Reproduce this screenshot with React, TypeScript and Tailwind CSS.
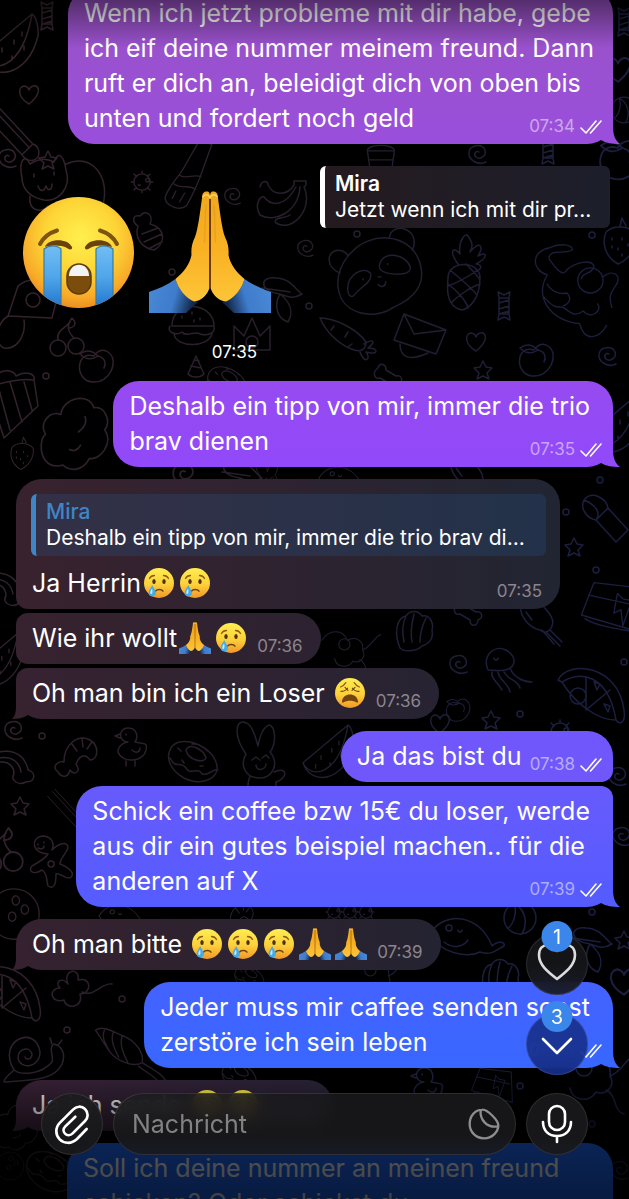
import type { ReactNode } from "react";

/* ---------- wallpaper ---------- */

const DOODLES: Record<string, string> = {
  heart: "M0 9C-12 2 -11 -8 -5 -9C-2 -9 0 -6 0 -5C1 -8 4 -10 7 -9C12 -6 9 2 0 9Z",
  star: "M0 -9L3 -3L9 -2L4 3L6 9L0 6L-6 9L-4 3L-9 -2L-3 -3Z",
  dot: "M3 0A3 3 0 1 1 -3 0A3 3 0 1 1 3 0Z",
  swirl: "M8 8C0 12 -10 6 -9 -2C-8 -9 4 -11 7 -4C9 2 2 6 -2 3C-5 0 -2 -4 1 -2",
  candy: "M-5 -8H5V8H-5ZM-5 -8L-6 -14L0 -11L6 -14L5 -8M-5 8L-6 14L0 11L6 14L5 8M-5 -3L5 -6M-5 3L5 0M-5 8L5 5",
  melon: "M-30 12C-22 38 16 34 26 -8C27 -16 24 -28 20 -30L-30 12ZM-30 12C-22 30 10 28 20 -30M-10 4v4M2 -4v4M10 -12v4M0 12v4M-16 14v4M12 2v4",
  pencil: "M-34 -26L20 32L32 20L-22 -38M-26 -34L28 24M20 32C26 40 34 40 38 34C40 28 38 22 32 20",
  cat: "M-40 -10C-44 -30 -36 -34 -32 -24C-22 -30 -16 -30 -8 -26C-4 -38 2 -32 4 -18C10 0 -4 14 -18 12C-30 10 -40 2 -40 -10ZM4 -24C30 -36 50 -10 40 20M-24 -2C-22 4 -18 4 -16 -2C-14 4 -10 2 -10 -4M-28 -14v3M-8 -16v3M-32 8C-34 22 -22 26 -14 18",
  germ: "M9 0A9 9 0 1 1 -9 0A9 9 0 1 1 9 0ZM4 -2a2 2 0 1 0 4 0a2 2 0 1 0 -4 0M-4 3a1 1 0 1 0 2 0M0 -9v-3M0 9v3M-9 0h-3M9 0h3M6 6l3 3M-6 6l-3 3M-6 -6l-3 -3M6 -6l3 -3",
  bottle: "M22 -44L12 -16C8 -4 2 10 -6 24C-12 30 -28 26 -30 16C-28 4 -14 -8 -8 -20L8 -48ZM-14 -10C-8 -4 2 -12 10 -8M-20 0C-12 6 -2 0 4 6M-22 16l4 -8M-14 20l6 -10",
  banana: "M-24 10C-30 0 -24 -10 -20 -8C-14 0 0 4 12 -18M-24 10C-10 18 14 8 16 -18M-8 18C8 28 30 4 20 -18M-8 18C-12 12 0 14 6 10M-24 -18C-22 -26 -16 -24 -16 -20C-10 -8 4 -10 10 -20L10 -24H22V-20L20 -18",
  bee: "M-8 -10C-14 -14 -14 -22 -6 -20C0 -28 8 -20 4 -12C20 -8 20 8 8 14C-4 12 -12 2 -8 -10ZM-4 -2L12 -8M-2 6L16 -2M4 12L16 6",
  burger: "M-20 2C-20 -26 22 -22 22 2ZM-22 2C-26 8 -16 12 -10 8C-6 14 4 6 8 10C14 12 24 10 22 2M-18 10C-16 24 16 24 20 10M-10 -8v2M0 -12v2M8 -6v2M2 -4v2",
  cherry: "M-4 10a8 8 0 1 1 -16 0a8 8 0 1 1 16 0ZM14 8a8 8 0 1 1 -16 0a8 8 0 1 1 16 0ZM-12 2C-14 -8 -4 -10 0 -16M4 0C-2 -6 -4 -12 2 -20C8 -14 4 -10 -2 -10",
  crown: "M-18 16L-18 -8L-8 2L0 -16L8 2L18 -8L18 16ZM6 8a6 6 0 1 1 -12 0a6 6 0 1 1 12 0",
  toad: "M-24 12L-14 -18C0 -30 22 -22 26 -10L20 14ZM-24 12C-34 18 -40 38 -28 44C-14 46 -6 30 -8 16M8 -4a7 7 0 1 1 -14 0a7 7 0 1 1 14 0",
  peach: "M-2 -10C-20 -16 -22 14 -4 16C14 18 24 -6 12 -14C6 -18 0 -14 -2 -10ZM-16 -12C-8 -18 -2 -14 2 -10C-4 -6 -10 -6 -16 -12M2 -10C10 -8 10 -2 8 2",
  corn: "M-8 8L0 -10L8 8C4 12 -4 12 -8 8ZM-5 0L5 2M-2 -6L3 -5",
  panda: "M-30 -24C-10 -46 28 -44 40 -18C52 10 34 26 14 34C-6 48 -40 42 -44 14C-46 0 -40 -14 -30 -24ZM-42 -2C-58 -8 -56 -26 -44 -26C-38 -26 -34 -22 -34 -20M10 -40C12 -54 36 -52 36 -34C36 -30 35 -28 34 -26M-34 14C-34 0 -18 -10 -10 -2C-8 8 -18 10 -28 22C-32 24 -34 20 -34 14ZM0 -12C4 -26 28 -22 32 -8C32 0 18 0 8 -2C0 -4 -2 -8 0 -12ZM-18 4v1M8 -12v1M-2 2h3M-2 10C2 14 6 12 6 7",
  pineapple: "M-14 6C-14 -12 18 -12 18 6C18 26 8 36 0 38C-12 36 -16 24 -14 6ZM-12 -2C0 8 12 18 14 22M-14 12C-6 18 4 28 6 36M4 -8C10 -2 16 4 18 8M16 -2C4 6 -8 12 -14 14M18 12C6 16 -6 26 -10 30M-4 -8C-14 -22 -8 -26 -2 -18C-4 -32 4 -40 6 -36C12 -28 10 -24 8 -20C18 -32 22 -26 16 -16C26 -22 26 -14 14 -8C22 -8 18 0 14 -2",
  carrot: "M-32 -22C-18 -22 4 -12 14 2C14 10 8 12 2 10C-16 4 -28 -12 -32 -22ZM-18 -14l-3 4M-4 -8l-3 5M0 4l-4 3M12 4C22 -2 24 2 16 8C28 8 26 16 14 12C20 20 12 24 8 12",
  envelope: "M-16 -22L26 -6L16 18L-26 4ZM-16 -22L-6 -2L26 -6M-20 8C-20 24 -8 24 8 17",
  cow: "M-30 -40C-50 -36 -50 -16 -32 -10C-46 14 -30 40 4 44C10 66 26 60 34 46M-30 -40C-18 -46 -4 -44 -4 -38C-12 -32 -30 -40 -30 -28C-20 -14 -14 -8 -10 -16C0 -24 16 -28 20 -20C18 -10 8 -14 6 -6M30 -4a14 14 0 1 1 -28 0a14 14 0 1 1 28 0ZM-36 14C-22 30 -20 24 -14 26C-4 34 0 36 8 30C16 40 30 30 24 22M30 -8C42 -18 52 -8 44 2C38 10 36 16 40 26M-32 0C-28 8 -18 12 -10 10C-4 16 -8 22 -14 24",
  berry: "M-14 -10C-6 -18 10 -16 16 -8C18 6 8 18 -2 22C-16 14 -18 0 -14 -10ZM-8 -4v2M2 -4v2M8 2v2M-2 6v2M-8 4v2M2 12v2M0 -16l2 -8l4 8",
  popcorn: "M-26 -14L-10 36L24 4L20 -22M-26 -14C-34 -24 -22 -30 -18 -26C-12 -34 0 -32 2 -26C12 -32 22 -28 20 -22M-16 -16L-4 28M-4 -20L8 20M10 -20L18 8M-26 -14C-12 -20 8 -24 20 -22",
  tree: "M-10 30C-30 36 -34 10 -26 2C-32 -8 -22 -20 -12 -16C-10 -32 14 -36 18 -22C28 -24 34 -10 28 -2C36 10 24 26 14 24C8 36 -4 36 -10 30ZM4 0C10 -4 12 -10 10 -14M-4 16C0 18 4 16 6 12",
  flashlight: "M-18 -16C-10 -26 4 -18 6 -8L26 14L14 26L-6 4C-16 2 -22 -8 -18 -16ZM-18 -16C-8 -12 0 -4 -6 4M6 -8L-6 4",
  donut: "M-24 -8C-18 -24 14 -16 22 4C28 22 6 28 -10 20C-24 12 -28 0 -24 -8ZM-8 -8C-4 -16 10 -8 12 0C10 6 -6 2 -8 -8ZM-24 0C-18 12 -14 2 -8 10C-4 18 4 8 8 16C16 18 18 10 24 12M-16 -10l3 3M-2 -14h3M12 -8l3 2M-12 2l2 3M6 8h3",
  duck: "M-2 -8C-12 -8 -12 -22 -2 -22C8 -22 8 -12 5 -8C14 -6 18 -8 16 0C14 12 -8 14 -12 2C-12 -4 -6 -8 -2 -8ZM-10 -16l-5 2l5 2M-4 -16v1M-4 11v5M5 11v5M2 0C6 4 10 2 10 -2",
  bunny: "M-16 -6C-30 -26 -26 -44 -14 -36C-8 -32 -6 -20 -4 -14C0 -36 10 -40 12 -28C14 -18 10 -10 8 -8C18 4 10 18 -2 18C-18 18 -22 4 -16 -6ZM-10 0l4 -3l4 3M0 -2l4 -3l3 3M-6 5C-6 12 4 10 4 4M-12 16C-18 30 -10 40 -16 50M12 12C26 6 26 18 14 22C12 32 20 38 18 48",
  shrimp: "M-20 20C-28 14 -18 8 -14 10C-14 -8 0 -18 12 -12C22 -6 20 8 12 8C8 2 2 2 -2 12C4 20 -4 24 -8 18C-10 26 -16 26 -20 20ZM-6 -8l5 7M4 -14l1 9M14 -10l-5 7",
  rainbow: "M-30 -4C-16 -22 14 -22 18 2C26 4 26 14 16 14C8 18 0 12 4 6C4 -8 -14 -12 -28 6M-28 2C-18 -14 8 -16 11 4",
  pizza: "M-32 -10C-22 -30 28 -26 34 20C36 32 30 36 26 30C6 30 -16 12 -28 -8ZM-28 -8C-10 -20 18 -16 26 30M-4 -12L-4 20L20 0M-4 6a8 8 0 1 1 -16 0a8 8 0 1 1 16 0M4 -8l6 2l-3 6zM14 14l6 2l-2 6z",
  jelly: "M-12 6C-18 -8 -6 -20 6 -14C16 -8 16 0 10 4C4 8 -6 6 -12 6ZM-6 -6a2 2 0 1 0 4 0M-8 8C-10 14 -2 18 2 26M-2 8C0 18 8 18 10 28M4 8C8 16 18 16 20 24M10 4C14 14 24 18 32 18",
  shell: "M-14 18C-20 4 -18 -12 -8 -14C-4 -20 4 -20 8 -14C16 -16 20 -6 18 0C20 10 14 14 8 16C2 22 -10 22 -14 18ZM-10 12C-12 2 -12 -6 -8 -14M-2 12C-4 2 -2 -8 0 -16M6 12C6 2 8 -4 12 -12",
  squid: "M-20 -20C-20 -6 -10 4 0 6C4 10 10 8 12 2C16 -6 4 -18 -4 -24M2 6l12 14M6 8l14 14M10 6l12 12M-14 -12l6 8",
  bone: "M-10 -8C-16 -4 -14 4 -8 2L2 8C2 16 10 14 10 8C16 6 14 -2 8 0L-2 -6C-2 -12 -8 -14 -10 -8Z",
  carton: "M-34 10L-20 -26L32 -20L34 30ZM-30 14C-20 22 10 26 34 30M-26 -12L30 0M6 -14L2 8L10 4L12 22L22 -6L12 -8Z",
  ginger: "M-2 -10C-18 -10 -20 -26 -8 -28C4 -28 4 -18 2 -14C8 -20 18 -24 18 -16C16 -10 10 -6 10 0C20 4 26 10 20 14C12 14 10 8 6 10C6 20 4 26 -2 22C-4 16 -2 10 -8 6C-18 12 -22 6 -18 2C-12 -2 -6 -4 -2 -10ZM-12 -20v1M-6 -22v1M-12 -16C-8 -14 -6 -16 -6 -18M4 0a3 3 0 1 1 -6 0a3 3 0 1 1 6 0",
  bowling: "M28 0A28 28 0 1 1 -28 0A28 28 0 1 1 28 0ZM-2 -14a4 5 0 1 0 8 -2a4 5 0 1 0 -8 2M8 -4a4 5 0 1 0 8 -2a4 5 0 1 0 -8 2M-6 4a4 5 0 1 0 8 -2a4 5 0 1 0 -8 2",
  snail: "M-18 10C-36 -20 4 -36 8 -8C8 8 -12 10 -14 -2C-14 -12 -2 -14 0 -6C0 0 -6 0 -7 -3M-18 10C-10 16 10 14 20 2C22 -4 16 -12 22 -16C30 -14 34 -6 30 4C22 22 -6 20 -28 22C-28 18 -22 14 -18 10M20 -16l-2 -6M26 -15l4 -5",
  cone: "M-34 -22C-26 -28 -14 -20 -4 -16C12 -10 20 4 18 14C8 20 -10 12 -18 2C-24 -6 -28 -14 -34 -22ZM-24 -22C-28 -14 -22 -6 -18 2M-14 -20C-18 -10 -12 0 -8 8M-4 -16C-8 -6 -2 6 2 14M18 14C30 22 40 26 44 34M14 18C24 26 34 30 38 38",
  flower: "M0 -6C-6 -20 12 -24 10 -10C24 -14 24 4 12 4C16 18 -2 20 -4 10C-18 14 -20 -2 -8 -2C-14 -8 -6 -14 0 -6ZM14 2C26 8 34 -8 44 -6",
  fish: "M-30 0C-16 -24 20 -20 32 12C38 6 46 8 44 12C36 16 32 22 20 18C8 24 -20 20 -30 0ZM-14 -6a3 3 0 1 0 6 0a3 3 0 1 0 -6 0M-2 -4a2 2 0 1 0 4 0M-16 8C-6 16 4 12 8 6",
  beachball: "M16 0A16 16 0 1 1 -16 0A16 16 0 1 1 16 0ZM-6 -15C6 -8 8 6 2 16M-6 -15C-2 -4 -8 8 -12 10",
  plant: "M0 4C-20 2 -22 -14 -4 -12C10 -12 16 0 22 4C12 10 6 6 0 4ZM0 4C-6 14 -4 28 8 32C14 22 10 12 0 4ZM-18 -2L10 2",
  monkey: "M-40 -14C-30 -30 -10 -30 -4 -14C8 -20 20 -14 18 0C24 10 14 20 4 16C-4 28 -20 24 -22 12M-16 -8a8 8 0 1 0 16 0a8 8 0 1 0 -16 0M18 0C30 -4 34 -18 44 -22M14 14C26 20 20 34 32 38",
  cup: "M-14 -8H16L12 20H-10ZM-14 -8C-14 -16 16 -16 16 -8M-12 2H14",
};

const PLACED: [string, number, number, number?][] = [
  ["melon", 12, 44], ["heart", 29, 95], ["pencil", 4, 126, 0.9], ["candy", 47, 16], ["swirl", 8, 158], ["star", 48, 160],
  ["cat", 62, 188], ["germ", 142, 182, 0.9], ["bottle", 192, 184, 0.9], ["swirl", 233, 196, 0.9], ["banana", 284, 205], ["bee", 146, 236],
  ["swirl", 306, 248, 0.9], ["toad", 32, 304], ["cherry", 70, 338], ["burger", 192, 324], ["crown", 252, 334], ["peach", 96, 366],
  ["corn", 196, 366], ["dot", 172, 272], ["dot", 309, 306], ["plant", 280, 290],
  ["cup", 380, 158, 0.9], ["swirl", 478, 154], ["candy", 548, 150],
  ["peach", 620, 160, 1.2], ["heart", 618, 70, 1.3], ["candy", 624, 22], ["beachball", 624, 110, 0.8],
  ["panda", 380, 275, 0.95], ["pineapple", 462, 272], ["candy", 504, 306], ["berry", 620, 242], ["cow", 576, 284, 0.9],
  ["carrot", 352, 340], ["envelope", 420, 336], ["heart", 476, 342], ["star", 483, 370], ["peach", 536, 360], ["swirl", 608, 356],
  ["dot", 357, 234], ["dot", 592, 235], ["bone", 388, 376],
  ["popcorn", 14, 402], ["tree", 74, 432, 1.1], ["berry", 22, 454, 0.7], ["donut", 228, 380, 0.8], ["swirl", 184, 474, 1.2],
  ["plant", 240, 474], ["fish", 340, 478, 0.7], ["bunny", 270, 480, 0.6], ["squid", 470, 480], ["dot", 46, 376],
  ["melon", 618, 424], ["flashlight", 602, 516], ["star", 574, 547], ["dot", 600, 480], ["dot", 566, 512], ["dot", 596, 570],
  ["carton", 612, 606, 0.9], ["rainbow", 2, 590], ["melon", 0, 660, 0.9],
  ["shell", 414, 630], ["bone", 468, 612], ["squid", 540, 624], ["swirl", 459, 664], ["jelly", 500, 664], ["pizza", 590, 690],
  ["monkey", 350, 650, 0.7], ["dot", 624, 662], ["swirl", 14, 730], ["dot", 42, 736], ["shrimp", 78, 752], ["duck", 130, 750],
  ["donut", 194, 758], ["bunny", 262, 760], ["rainbow", 10, 768], ["star", 491, 720], ["dot", 520, 714], ["peach", 458, 710, 0.7],
  ["melon", 330, 752, 0.9], ["germ", 560, 732], ["heart", 440, 724], ["swirl", 618, 776],
  ["star", 20, 806], ["pencil", 68, 812, 0.6], ["cherry", 6, 852, 1.2], ["ginger", 50, 864], ["bowling", 14, 914, 0.9],
  ["fish", 120, 916, 0.7], ["shrimp", 240, 914, 0.7], ["germ", 334, 912, 0.7], ["germ", 350, 912, 0.7], ["germ", 366, 912, 0.7],
  ["fish", 460, 934], ["beachball", 520, 918], ["plant", 590, 940], ["dot", 592, 912], ["swirl", 622, 836], ["star", 624, 940],
  ["pizza", 6, 988], ["flower", 68, 990], ["cone", 126, 1050, 0.9], ["snail", 32, 1060], ["dot", 67, 1030],
  ["dot", 122, 999], ["donut", 250, 976, 0.6], ["monkey", 376, 976, 0.7], ["shell", 500, 978],
  ["heart", 624, 982, 1.4], ["carton", 492, 1084, 0.6], ["donut", 240, 1074, 0.7], ["duck", 426, 1090], ["monkey", 592, 1076],
  ["dot", 520, 1086], ["bowling", 10, 1166, 0.5], ["tree", 16, 1126, 0.7],
  ["donut", 52, 1168], ["swirl", 620, 1170], ["dot", 592, 1124],
];

function Wallpaper() {
  return (
    <svg
      aria-hidden="true"
      viewBox="0 0 629 1199"
      preserveAspectRatio="xMidYMin slice"
      className="pointer-events-none absolute inset-0 h-full w-full"
    >
      <defs>
        <linearGradient id="ink" x1="0" y1="0" x2="1" y2="0.25">
          <stop offset="0" stopColor="#36232d" />
          <stop offset="0.5" stopColor="#261e2b" />
          <stop offset="1" stopColor="#1a1e40" />
        </linearGradient>
        <linearGradient id="face" x1="0" y1="0" x2="0" y2="1">
          <stop offset="0" stopColor="#fdee52" />
          <stop offset="0.55" stopColor="#fdd03a" />
          <stop offset="1" stopColor="#f0972a" />
        </linearGradient>
        <radialGradient id="bigface" cx="0.52" cy="0.36" r="0.66">
          <stop offset="0" stopColor="#fff04e" />
          <stop offset="0.5" stopColor="#fdd436" />
          <stop offset="0.82" stopColor="#f8ab28" />
          <stop offset="1" stopColor="#e88a20" />
        </radialGradient>
        <linearGradient id="tear" x1="0" y1="0" x2="0" y2="1">
          <stop offset="0" stopColor="#72bdf3" />
          <stop offset="0.5" stopColor="#4fa6ea" />
          <stop offset="1" stopColor="#2274cc" />
        </linearGradient>
        <linearGradient id="hand" x1="0" y1="0" x2="0" y2="1">
          <stop offset="0" stopColor="#f0a81e" />
          <stop offset="0.5" stopColor="#f9b022" />
          <stop offset="1" stopColor="#fdc538" />
        </linearGradient>
        <linearGradient id="sleeve" x1="0" y1="0" x2="1" y2="0.2">
          <stop offset="0" stopColor="#4a8ad6" />
          <stop offset="0.6" stopColor="#3f7ccc" />
          <stop offset="1" stopColor="#12284a" />
        </linearGradient>
        <clipPath id="faceclip">
          <circle cx="55.5" cy="55.5" r="55.5" />
        </clipPath>
        <mask id="doodles" maskUnits="userSpaceOnUse" x="0" y="0" width="629" height="1199">
          <g fill="none" stroke="#fff" strokeWidth="1.5" strokeLinecap="round" strokeLinejoin="round">
            {PLACED.map(([name, x, y, s = 1], i) => (
              <path key={i} d={DOODLES[name]} transform={`translate(${x} ${y}) scale(${s})`} />
            ))}
          </g>
        </mask>
      </defs>
      <rect width="629" height="1199" fill="url(#ink)" mask="url(#doodles)" />
    </svg>
  );
}

/* ---------- emoji ---------- */

const INLINE = "-mt-1 mx-[3px] inline-block h-[30px] w-[30px] align-middle";

function Cry() {
  return (
    <svg role="img" aria-label="😢" viewBox="0 0 30 30" className={INLINE}>
      <circle cx="15" cy="15" r="15" fill="url(#face)" />
      <path d="M5.5 10.5C6.5 8.5 8.5 7.5 10.5 7.5M24.5 10.5C23.5 8.5 21.5 7.5 19.5 7.5" fill="none" stroke="#8a5a12" strokeWidth="1.3" strokeLinecap="round" />
      <ellipse cx="10" cy="13.6" rx="1.7" ry="2.5" fill="#4d2f0c" />
      <ellipse cx="20" cy="13.6" rx="1.7" ry="2.5" fill="#4d2f0c" />
      <path d="M11.5 23.2C13 20.8 17.5 20.8 19 23.2" fill="none" stroke="#6d3f0c" strokeWidth="1.5" strokeLinecap="round" />
      <path d="M8.2 17C7 20 4.600 22 4.600 25C4.600 29.600 12.200 29.400 12 25C11.800 22 9.200 20 8.200 17Z" fill="#48abe4" />
      <path d="M8 20.400C6.600 22.600 6 24 6.400 25.600C7.400 26.600 9.400 25 8 20.400Z" fill="#c4ecff" />
    </svg>
  );
}

function Weary() {
  return (
    <svg role="img" aria-label="😩" viewBox="0 0 30 30" className={INLINE}>
      <circle cx="15" cy="15" r="15" fill="url(#face)" />
      <path d="M5.5 9C7.800 8.200 9.600 6.600 10.800 4.600M24.500 9C22.200 8.200 20.400 6.600 19.200 4.600" fill="none" stroke="#8a5a12" strokeWidth="1.2" strokeLinecap="round" />
      <path d="M6 13.400C8.600 13.400 11 12.400 12.600 10.200M24 13.400C21.400 13.400 19 12.400 17.400 10.200M10 9.400L13 12.400M20 9.400L17 12.400" fill="none" stroke="#6d430e" strokeWidth="1.1" strokeLinecap="round" />
      <path d="M7 23.600C7.400 18.800 11 16.600 15 16.600C19 16.600 22.600 18.800 23 23.600C23 25 22 24.800 21.200 24.200C17.600 22.200 12.400 22.200 8.800 24.200C8 24.800 7 25 7 23.600Z" fill="#74420c" />
    </svg>
  );
}

function PraySvg({ className }: { className: string }) {
  const hand =
    "M53 7C53 2 55 0.500 58 0.500C60 0.500 61 2 61 6V95C59 104 52 110 45 110.500C37 107 29 98 26.500 88C34 82 41 73 42.500 64C42 58 43 52 46 46C49 38 51 22 53 7Z";
  const sleeve = "M0 101C9 98 18 94 26.500 88C29 98 37 107 49 111L37 122H0Z";
  return (
    <svg role="img" aria-label="🙏" viewBox="0 0 122 122" className={className}>
      <path d={sleeve} fill="url(#sleeve)" />
      <path d={hand} fill="url(#hand)" />
      <g transform="translate(122 0) scale(-1 1)">
        <path d={sleeve} fill="url(#sleeve)" />
        <path d={hand} fill="url(#hand)" />
      </g>
      <path d="M61 8V97" stroke="#6b3c05" strokeWidth="2" />
      <path d="M57 14C56 30 56 42 55.500 52M65 14C66 30 66 42 66.500 52" stroke="#dd8e16" strokeWidth="1.500" fill="none" opacity="0.4" />
      <path d="M54 6C55 3 60 3 61 7M68 6C67 3 62 3 61 7" stroke="#fbd068" strokeWidth="1.500" fill="none" />
    </svg>
  );
}

function Pray() {
  return <PraySvg className="-mt-1 mx-[2px] inline-block h-8 w-8 align-middle" />;
}

function Sob() {
  return (
    <svg role="img" aria-label="😭" viewBox="0 0 111 111" className="h-[111px] w-[111px]">
      <circle cx="55.5" cy="55.5" r="55.5" fill="url(#bigface)" />
      <g clipPath="url(#faceclip)">
        <path d="M21 52C26 48 34 48 38 52V111H21Z" fill="url(#tear)" stroke="#3a7c9c" strokeWidth="1.2" />
        <path d="M90 52C85 48 77 48 73 52V111H90Z" fill="url(#tear)" stroke="#3a7c9c" strokeWidth="1.2" />
      </g>
      <path d="M17 47C20 41 26 36 34 33.500M94 47C91 41 85 36 77 33.500" fill="none" stroke="#7d5410" strokeWidth="4" strokeLinecap="round" />
      <path d="M22 50C24 42 44 40 49 50C50 53 46 53 44 51C38 48 30 48 22 50ZM89 50C87 42 67 40 62 50C61 53 65 53 67 51C73 48 81 48 89 50Z" fill="#6a430c" />
      <rect x="44" y="67" width="24" height="30" rx="12" fill="#7a4d0c" stroke="#5d3a0a" strokeWidth="1.500" />
      <path d="M46 79C46 64 66 64 66 79Z" fill="#f1f3f5" />
    </svg>
  );
}

/* ---------- message pieces ---------- */

function Checks() {
  return (
    <svg role="img" aria-label="gelesen" viewBox="0 0 22 14" className="h-[14px] w-[22px]" fill="none" stroke="#fff" strokeWidth="1.6" strokeLinecap="round" strokeLinejoin="round">
      <path d="M1 8L6 13L16 1M10.500 13L21 1" />
    </svg>
  );
}

function Tail({ side, fill }: { side: "left" | "right"; fill: string }) {
  return (
    <svg
      aria-hidden="true"
      viewBox="0 0 28 26"
      className={`absolute bottom-0 h-[26px] w-7 ${side === "right" ? "-right-[7px]" : "-left-[7px] -scale-x-100"} ${fill}`}
    >
      {side === "right" ? (
        <path d="M8 0H21V8C21 17 23 22 28 26C20 26 14 25 9 22L4 18Z" />
      ) : (
        <path d="M8 0H21V14C21 19 22 23 25 26C19 26 14 25 9 22L4 18Z" />
      )}
    </svg>
  );
}

type MessageProps = {
  mine?: boolean;
  time: string;
  fill: string;
  tail?: string;
  shape: string;
  multi?: boolean;
  quote?: ReactNode;
  wide?: string;
  inset?: string;
  children: ReactNode;
};

function Message({ mine, time, fill, tail, shape, multi, quote, wide = "", inset = "pr-3", children }: MessageProps) {
  const stacked = multi || quote;
  return (
    <li className={`flex ${mine ? "justify-end" : "justify-start"}`}>
      <article className={`relative max-w-full py-2 pl-4 ${mine ? "pr-[11px]" : "pr-[18px]"} ${shape} ${fill} ${wide}`}>
        {tail && <Tail side={mine ? "right" : "left"} fill={tail} />}
        {quote}
        <div className={stacked ? "relative grid" : "relative flex items-end gap-2"}>
          <p className={`text-[25px] leading-[35px] whitespace-pre-line ${stacked ? "col-start-1 row-start-1" : ""} ${multi ? inset : ""}`}>
            {children}
          </p>
          <div
            className={`flex h-[19px] items-center gap-[5px] text-[17px] leading-[19px] ${mine ? "text-white/50" : "text-[#8b858f]"} ${stacked ? "col-start-1 row-start-1 self-end justify-self-end" : ""}`}
          >
            <time>{time}</time>
            {mine && <Checks />}
          </div>
        </div>
      </article>
    </li>
  );
}

const ROUND_BUTTON =
  "relative grid h-[62px] w-[62px] shrink-0 place-items-center rounded-full border border-white/10 backdrop-blur-md";

function Badge({ children }: { children: ReactNode }) {
  return (
    <span className="absolute -top-[13px] left-1/2 grid h-[31px] w-[31px] -translate-x-1/2 place-items-center rounded-full bg-[#3a86ea] text-xl">
      {children}
    </span>
  );
}

export default function App() {
  return (
    <div className="relative h-dvh overflow-hidden bg-black font-['Inter','Liberation_Sans',sans-serif] text-white">
      <Wallpaper />

      <main className="relative -mt-3 px-4">
        <ol className="flex flex-col gap-3">
          <Message mine multi inset="pr-2" time="07:34" shape="rounded-[26px]" fill="bg-linear-to-b from-[#9a52c4] to-[#994fdc]" tail="fill-[#994fdc]">
            {"Wenn ich jetzt probleme mit dir habe, gebe\nich eif deine nummer meinem freund. Dann\nruft er dich an, beleidigt dich von oben bis\nunten und fordert noch geld"}
          </Message>

          <li className="flex items-start justify-between gap-4 pt-[10px] pb-[5px]">
            <div className="ml-[7px] flex flex-col pt-[25px]">
              <div className="flex items-center gap-[15px]">
                <Sob />
                <PraySvg className="h-[122px] w-[122px]" />
              </div>
              <time className="mt-[27px] self-end pr-[14px] text-[17px] leading-6">07:35</time>
            </div>
            <blockquote className="mr-[3px] w-[290px] shrink-0 rounded-md border-l-[5px] border-white bg-linear-to-r from-[#241a1f] to-[#1c1e2b] py-[5px] pl-[10px]">
              <cite className="block text-[21px] leading-[26px] font-semibold not-italic">Mira</cite>
              <p className="text-[21px] leading-[26px]">Jetzt wenn ich mit dir pr...</p>
            </blockquote>
          </li>

          <Message mine multi time="07:35" shape="rounded-[26px]" fill="bg-linear-to-b from-[#964bf0] to-[#9149fa]" tail="fill-[#9149fa]">
            {"Deshalb ein tipp von mir, immer die trio\nbrav dienen"}
          </Message>

          <li>
            <ol className="flex flex-col gap-1">
              <Message
                time="07:35"
                shape="rounded-[26px] rounded-bl-[12px]"
                fill="bg-linear-to-r from-[#38222e] via-[#2e2330] to-[#212532]"
                wide="w-[544px]"
                quote={
                  <blockquote className="mt-[7px] mb-[10px] -ml-px -mr-1 rounded-md border-l-[5px] border-[#3e86c6] bg-[#2468a8]/20 py-[5px] pl-[10px]">
                    <cite className="block text-[21px] leading-[26px] font-medium text-[#3e86c6] not-italic">Mira</cite>
                    <p className="truncate text-[21px] leading-[26px]">Deshalb ein tipp von mir, immer die trio brav di...</p>
                  </blockquote>
                }
              >
                Ja Herrin
                <Cry />
                <Cry />
              </Message>
              <Message time="07:36" shape="rounded-[26px] rounded-l-[12px]" fill="bg-linear-to-r from-[#38222f] to-[#2c2231]">
                Wie ihr wollt
                <Pray />
                <Cry />
              </Message>
              <Message time="07:36" shape="rounded-[26px] rounded-tl-[12px]" fill="bg-linear-to-r from-[#372230] to-[#272332]" tail="fill-[#372230]">
                {"Oh man bin ich ein Loser "}
                <Weary />
              </Message>
            </ol>
          </li>

          <li>
            <ol className="flex flex-col gap-1">
              <Message mine time="07:38" shape="rounded-[26px] rounded-br-[12px]" fill="bg-[#6f57fb]">
                Ja das bist du
              </Message>
              <Message mine multi time="07:39" shape="rounded-[26px] rounded-tr-[12px]" fill="bg-linear-to-b from-[#675afc] to-[#555cff]" tail="fill-[#555cff]">
                {"Schick ein coffee bzw 15€ du loser, werde\naus dir ein gutes beispiel machen.. für die\nanderen auf X"}
              </Message>
            </ol>
          </li>

          <Message time="07:39" shape="rounded-[26px]" fill="bg-linear-to-r from-[#35212f] to-[#242331]" tail="fill-[#35212f]">
            {"Oh man bitte "}
            <Cry />
            <Cry />
            <Cry />
            <Pray />
            <Pray />
          </Message>

          <Message mine multi time="07:40" shape="rounded-[26px]" fill="bg-linear-to-b from-[#4462ff] to-[#3867ff]" tail="fill-[#3867ff]">
            {"Jeder muss mir caffee senden sonst\nzerstöre ich sein leben"}
          </Message>

          <Message time="07:40" shape="rounded-[26px]" fill="bg-linear-to-r from-[#3b2338] to-[#2a2338]" tail="fill-[#3b2338]">
            {"Ja ich sende "}
            <Cry />
            <Cry />
          </Message>

          <Message mine multi time="07:41" shape="rounded-[26px]" fill="bg-[#1f6bff]" wide="w-[546px]">
            {"Soll ich deine nummer an meinen freund\nschicken? Oder schickst du"}
          </Message>
        </ol>
      </main>

      <div className="pointer-events-none absolute inset-x-0 top-0 h-12 bg-linear-to-b from-black/45 to-transparent" />
      <div className="pointer-events-none absolute inset-x-0 bottom-0 h-[130px] bg-linear-to-b from-transparent via-black/65 via-50% to-black/75" />

      <footer className="absolute inset-x-[41px] bottom-[44px] flex flex-col items-end gap-[18px]">
        <button type="button" aria-label="Reaktionen, 1 neu" className={`${ROUND_BUTTON} bg-[#17171a]/85`}>
          <svg aria-hidden="true" viewBox="0 0 40 38" className="-mt-1 h-[38px] w-10" fill="none" stroke="#dcdcde" strokeWidth="2.6" strokeLinejoin="round">
            <path d="M20 36C11 29 2 22 2 12C2 5 6 2 11 2C15 2 18 4 20 8C22 4 25 2 29 2C34 2 38 5 38 12C38 22 29 29 20 36Z" />
          </svg>
          <Badge>1</Badge>
        </button>
        <button type="button" aria-label="Nach unten, 3 neu" className={`${ROUND_BUTTON} bg-[#142b85]/85`}>
          <svg aria-hidden="true" viewBox="0 0 32 18" className="mt-1 h-[18px] w-8" fill="none" stroke="#fff" strokeWidth="2.6" strokeLinecap="round" strokeLinejoin="round">
            <path d="M2 2L16 16L30 2" />
          </svg>
          <Badge>3</Badge>
        </button>

        <form className="flex w-full items-center gap-[10px]" onSubmit={(e) => e.preventDefault()}>
          <button type="button" aria-label="Anhang" className={`${ROUND_BUTTON} bg-[#1a1a1c]/90`}>
            <svg aria-hidden="true" viewBox="160 400 108 123" className="h-[41px] w-9" fill="none" stroke="#fff" strokeWidth="8" strokeLinecap="round" strokeLinejoin="round">
              <path d="M258 475L229 505C212 521 190 519 177 506C164 493 163 471 178 456L217 417C227 406 243 405 253 415C264 426 263 441 253 451L216 488C209 495 199 495 193 489C187 483 187 474 194 467L224 438" />
            </svg>
          </button>
          <div className="flex h-[62px] min-w-0 flex-1 items-center rounded-full border border-white/10 bg-[#1a1a1c]/85 pr-[15px] pl-[18px] backdrop-blur-sm">
            <input
              type="text"
              aria-label="Nachricht"
              placeholder="Nachricht"
              className="min-w-0 flex-1 bg-transparent text-[25px] leading-[35px] text-white outline-none placeholder:text-[#828285]"
            />
            <button type="button" aria-label="Sticker">
              <svg aria-hidden="true" viewBox="476 416 96 96" className="h-8 w-8" fill="none" stroke="#8d8d90" strokeWidth="7" strokeLinecap="round" strokeLinejoin="round">
                <path d="M519 421C496 422 481 441 481 464C481 488 500 507 524 507C548 507 567 488 567 468C567 453 534 420 519 421Z" />
                <path d="M514 423C511 451 533 477 566 471" />
              </svg>
            </button>
          </div>
          <button type="button" aria-label="Sprachnachricht" className={`${ROUND_BUTTON} bg-[#1a1a1c]/90`}>
            <svg aria-hidden="true" viewBox="0 0 32 40" className="h-10 w-8" fill="none" stroke="#fff" strokeWidth="2.6" strokeLinecap="round">
              <rect x="8" y="2" width="16" height="24" rx="8" />
              <path d="M2 18C2 27 8 32 16 32C24 32 30 27 30 18M16 32V38" />
            </svg>
          </button>
        </form>
      </footer>
    </div>
  );
}
